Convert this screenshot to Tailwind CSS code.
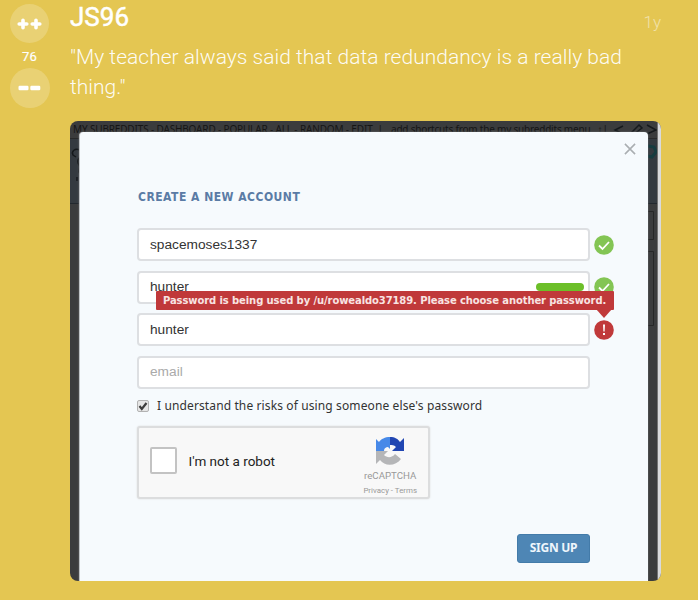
<!DOCTYPE html>
<html lang="en">
<head>
<meta charset="utf-8">
<title>JS96</title>
<script src="https://cdn.jsdelivr.net/npm/@tailwindcss/browser@4"></script>
</head>
<body class="w-[698px] h-[600px] overflow-hidden bg-[#e4c652] font-['Roboto',sans-serif]">
<article class="flex h-[600px] pl-[10px]">
  <aside class="flex w-[39px] flex-col items-center pt-1 text-white">
    <button class="flex size-[39px] items-center justify-center rounded-full bg-white/20">
      <svg class="h-3 w-[25px]" viewBox="0 0 25 12" fill="none" stroke="currentColor" stroke-width="3.6" stroke-linecap="round"><path d="M2.200 6h7.600M6 2.200v7.600M15.200 6h7.600M19 2.200v7.600"/></svg>
    </button>
    <span class="flex h-[25px] items-center pt-0.5 text-[13px] tracking-[0.2px] [-webkit-text-stroke:0.2px_white]">76</span>
    <button class="flex size-[40px] items-center justify-center rounded-full bg-white/20">
      <svg class="h-3 w-[25px]" viewBox="0 0 25 12" fill="currentColor"><rect x="1.500" y="3.800" width="10" height="4.400" rx="1.200"/><rect x="13.300" y="3.800" width="10" height="4.400" rx="1.200"/></svg>
    </button>
  </aside>
  <main class="ml-[21px] w-[591px]">
    <header class="flex h-[42px] justify-between whitespace-nowrap text-white">
      <h1 class="pt-[1px] text-[26px] leading-[32px] font-normal [-webkit-text-stroke:0.5px_white]">JS96</h1>
      <span class="pt-[12px] text-[17px] leading-5 font-light text-white/50">1y</span>
    </header>
    <p class="h-[79px] text-[21px] leading-[30px] font-light tracking-[0.015px] text-white/95"><span class="block whitespace-nowrap">"My teacher always said that data redundancy is a really bad</span><span class="block">thing."</span></p>

    <div class="relative h-[460px] w-[591px] overflow-hidden rounded-lg bg-[#3b3c3d]">
      <div class="flex h-[18px] border-b border-[#292a2b] pt-[2px] pl-[3px] font-['Noto_Sans',sans-serif] text-[10px] leading-[13px] text-[#151515]">
        <span class="w-[318px] shrink-0 tracking-[-0.15px] whitespace-pre">MY SUBREDDITS - DASHBOARD - POPULAR - ALL - RANDOM - EDIT  |</span>
        <span class="tracking-[-0.2px] whitespace-pre">add shortcuts from the my subreddits menu   ↑|</span>
      </div>
      <div class="h-[65px] border-b border-[#22282e] bg-[#343a40]"></div>
      <svg class="absolute inset-0 size-full" viewBox="0 0 591 460" fill="none" stroke="#15191c" stroke-width="1.5">
        <path d="M10 29C5 27 1 30 3 34l3 2M10 36c-3 3-3 5-1 8s-2 6 1 9M7 56v4"/>
        <path d="M553 5l-8 4 8 4M560 13l9-9 3 3-9 7M577 4l9 5-9 4"/>
        <path d="M578 25l6 1 2 5-4 5-5-1" stroke="#173c40" stroke-width="3"/>
        <path d="M578 90.500h5.500v28H578M578 130.500h5.500v74H578" stroke="#262727" stroke-width="1"/>
        <path d="M589.500 0v460" stroke="#d9dadc" stroke-width="3"/>
        <path d="M587.500 0v460" stroke="#747474" stroke-width="1"/>
      </svg>

      <section class="absolute top-[11px] left-[9px] h-[455px] w-[569px] rounded-t-[4px] border-l border-[#bfc3c6] bg-[#f6fafd] pt-[58px] pl-[57px] font-['Liberation_Sans',sans-serif] text-[#333] shadow-[0_0_2px_#777]">
        <svg class="absolute top-[11px] left-[544px] size-[12px]" viewBox="0 0 13 13" stroke="#aaaeb1" stroke-width="1.7"><path d="M1 1l11 11M12 1L1 12"/></svg>
        <h2 class="h-[38px] pl-px font-['DejaVu_Sans_Condensed','DejaVu_Sans',sans-serif] text-[12px] leading-[15px] font-bold text-[#5a7ba5]"><span class="tracking-[0.5px]">CREATE A NEW ACCOUNT</span></h2>
        <form class="flex flex-col text-[13.7px]">
          <div class="mb-[9.500px] flex h-[33px] items-center gap-1">
            <div class="flex h-[33px] w-[453px] items-center rounded-[4px] border-2 border-[#dddfe2] bg-white pt-px pl-[11px]">spacemoses1337</div>
            <svg class="size-5" viewBox="0 0 20 20"><circle cx="10" cy="10" r="9.800" fill="#83c554"/><path d="M5 10.500l3.500 3.500L15 7" fill="none" stroke="#fff" stroke-width="1.800"/></svg>
          </div>
          <div class="relative mb-[9.500px] flex h-[33px] items-center gap-1">
            <div class="flex h-[33px] w-[453px] items-center justify-between rounded-[4px] border-2 border-[#dddfe2] bg-white pr-[4px] pl-[11px]">hunter<span class="h-2 w-12 rounded-full bg-[#6cbf29]"></span></div>
            <svg class="size-5" viewBox="0 0 20 20"><circle cx="10" cy="10" r="9.800" fill="#83c554"/><path d="M5 10.500l3.500 3.500L15 7" fill="none" stroke="#fff" stroke-width="1.800"/></svg>
            <div class="absolute top-[20px] left-[19px] z-10 flex h-[19px] w-[458px] items-center rounded-[1px] bg-[#c0393a] pl-[7px] font-['DejaVu_Sans',sans-serif] text-[10px] font-bold tracking-[-0.1px] whitespace-nowrap text-[#f8e4e3]">Password is being used by /u/rowealdo37189. Please choose another password.
              <svg class="absolute top-[18px] left-[440px] h-[9px] w-4" viewBox="0 0 16 9"><path d="M0 0h16L8 9z" fill="#c0393a"/></svg>
            </div>
          </div>
          <div class="mb-[9.500px] flex h-[33px] items-center gap-1">
            <div class="flex h-[33px] w-[453px] items-center rounded-[4px] border-2 border-[#dddfe2] bg-white pt-px pl-[11px]">hunter</div>
            <svg class="size-5" viewBox="0 0 20 20"><circle cx="10" cy="10" r="9.800" fill="#c0393a"/><path d="M9 4.500h2l-.4 7H9.400zM9 13h2v2H9z" fill="#fff"/></svg>
          </div>
          <div class="flex h-[33px] w-[453px] items-center rounded-[4px] border-2 border-[#dddfe2] bg-white pt-px pl-[11px] text-[#aaa]">email</div>
          <label class="mt-[8px] flex h-[18px] items-center gap-2 font-['Noto_Sans',sans-serif] text-[12px] whitespace-nowrap">
            <svg class="size-[12px]" viewBox="0 0 12 12"><rect x=".5" y=".5" width="11" height="11" rx="1.500" fill="#e6e6e6" stroke="#b2b2b2"/><path d="M2.500 6l2.300 3L9.500 3" fill="none" stroke="#3c3c3c" stroke-width="2.200"/></svg>
            <span class="tracking-[0.12px]">I understand the risks of using someone else's password</span>
          </label>
          <div class="mt-[11px] flex h-[73px] w-[293px] items-center rounded-[3px] border-2 border-[#dcddde] bg-[#f8f8f8] pr-[11px] pl-[10.500px] shadow-[0_0_2px_#ddd]">
            <span class="mt-[-3px] size-[27px] rounded-[2px] border-2 border-[#c3c3c3] bg-white"></span>
            <span class="mt-[-1px] ml-3 font-['Roboto',sans-serif] text-[13.500px] text-[#222]">I'm not a robot</span>
            <div class="ml-auto flex flex-col items-center font-['Roboto',sans-serif] whitespace-nowrap text-[#999]">
              <svg class="mt-[6px] size-[30px]" viewBox="0 0 30 30">
                <path d="M15 1C10 1 6 3 4 6L1 3v12h8c0-3 2-4 4-4l2 2z" fill="#4789e8"/>
                <path d="M15 1c5 0 8 2 10 5l4-4v13H17l4-4c-2-2-4-2-6-2z" fill="#2146b2"/>
                <path d="M1 15h12l-4 4c3 3 8 3 11-1l6 5c-5 7-16 8-21 1l-4 4z" fill="#b5b6b8"/>
              </svg>
              <span class="mt-[4px] text-[9.700px] leading-[12px]">reCAPTCHA</span>
              <span class="mt-[4px] text-[7.900px] leading-[9px]">Privacy - Terms</span>
            </div>
          </div>
          <button type="button" class="mt-[35px] ml-[380px] h-[29px] w-[73px] rounded-[3px] border border-[#437ba9] bg-[#4e86b5] font-['Noto_Sans',sans-serif] text-[12px] font-bold tracking-[-0.25px] text-[#eef6fc]">SIGN UP</button>
        </form>
      </section>
    </div>
  </main>
</article>
</body>
</html>
